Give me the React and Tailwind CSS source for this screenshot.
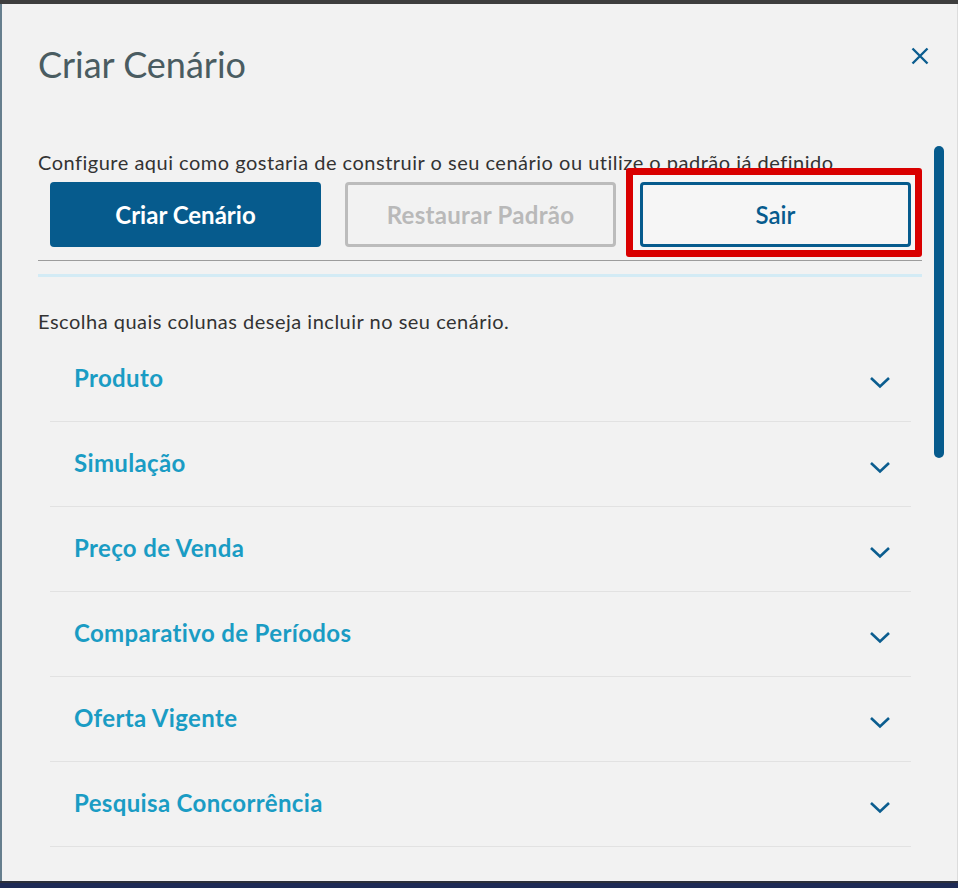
import React from 'react';

const sections = [
  'Produto',
  'Simulação',
  'Preço de Venda',
  'Comparativo de Períodos',
  'Oferta Vigente',
  'Pesquisa Concorrência',
];

const Chevron = () => (
  <svg width="22" height="13" viewBox="0 0 22 13" fill="none">
    <polyline points="2,2 11,10.5 20,2" stroke="#0b5d8f" strokeWidth="2.6" />
  </svg>
);

const App = () => {
  return (
    <div className="w-[958px] h-[888px] overflow-hidden flex flex-col bg-[#f2f2f2] font-['Lato','Liberation_Sans',sans-serif]">
      {/* Top bar */}
      <div className="h-[4px] bg-[#3e3e3e] shrink-0" />

      <div className="flex-1 flex min-h-0">
        <div className="w-[2px] bg-[#667f8e] shrink-0" />

        {/* Modal */}
        <div className="relative flex-1 min-w-0 pl-[36px] pr-[35px] border-r border-[#dcdcdc]">
          {/* Header */}
          <div className="flex items-center justify-between pt-[38px]">
            <h1 className="text-[36px] leading-[44px] font-normal text-[#4a5c61]">Criar Cenário</h1>
            <button className="mr-[-7px] mt-[-16px]">
              <svg width="18" height="18" viewBox="0 0 18 18" fill="none">
                <path d="M1.5 1.5 L16.5 16.5 M16.5 1.5 L1.5 16.5" stroke="#0b5d8f" strokeWidth="2.4" />
              </svg>
            </button>
          </div>

          <p className="mt-[64px] text-[20px] leading-[24px] tracking-[0.5px] text-[#333333] whitespace-nowrap">
            Configure aqui como gostaria de construir o seu cenário ou utilize o padrão já definido
          </p>

          {/* Buttons */}
          <div className="grid grid-cols-3 gap-6 ml-3 mr-[11px] mt-[8px]">
            <button className="h-[65px] rounded-[4px] bg-[#065b8d] text-white text-[24px] font-bold">
              Criar Cenário
            </button>
            <button className="h-[65px] rounded-[4px] border-[3px] border-[#bcbcbc] text-[#b9b9b9] text-[24px] tracking-[0.3px] font-bold">
              Restaurar Padrão
            </button>
            <div className="relative">
              <div className="absolute left-[-14px] right-[-11px] top-[-14px] bottom-[-10px] border-[7px] border-[#d90000] rounded-[3px] bg-[#f6f6f6]" />
              <button className="relative w-full h-[65px] rounded-[4px] border-[3px] border-[#065b8d] text-[#065b8d] text-[24px] font-semibold">
                Sair
              </button>
            </div>
          </div>

          <div className="mt-[13px] h-px bg-[#9c9c9c]" />
          <div className="mt-[13px] h-[3px] bg-[#d3ebf5]" />

          <p className="mt-[32px] text-[20px] leading-[24px] tracking-[0.5px] text-[#333333]">
            Escolha quais colunas deseja incluir no seu cenário.
          </p>

          {/* Accordion */}
          <div className="mt-[4px] ml-3 mr-[11px]">
            {sections.map((s) => (
              <div
                key={s}
                className="h-[85px] border-b border-[#e2e2e2] flex items-center justify-between pl-6 pr-5"
              >
                <span className="text-[24px] tracking-[0.35px] font-bold text-[#1a9cc4] mt-[-2px]">{s}</span>
                <span className="mt-[6px]">
                  <Chevron />
                </span>
              </div>
            ))}
          </div>

          {/* Scrollbar */}
          <div className="absolute left-[932px] top-[142px] w-[10px] h-[312px] rounded-full bg-[#065b8d]" />
        </div>
      </div>

      {/* Bottom bar */}
      <div className="h-[7px] shrink-0 border-t-2 border-[#2b2f3a] bg-[#1d2a55]" />
    </div>
  );
};

export default App;
